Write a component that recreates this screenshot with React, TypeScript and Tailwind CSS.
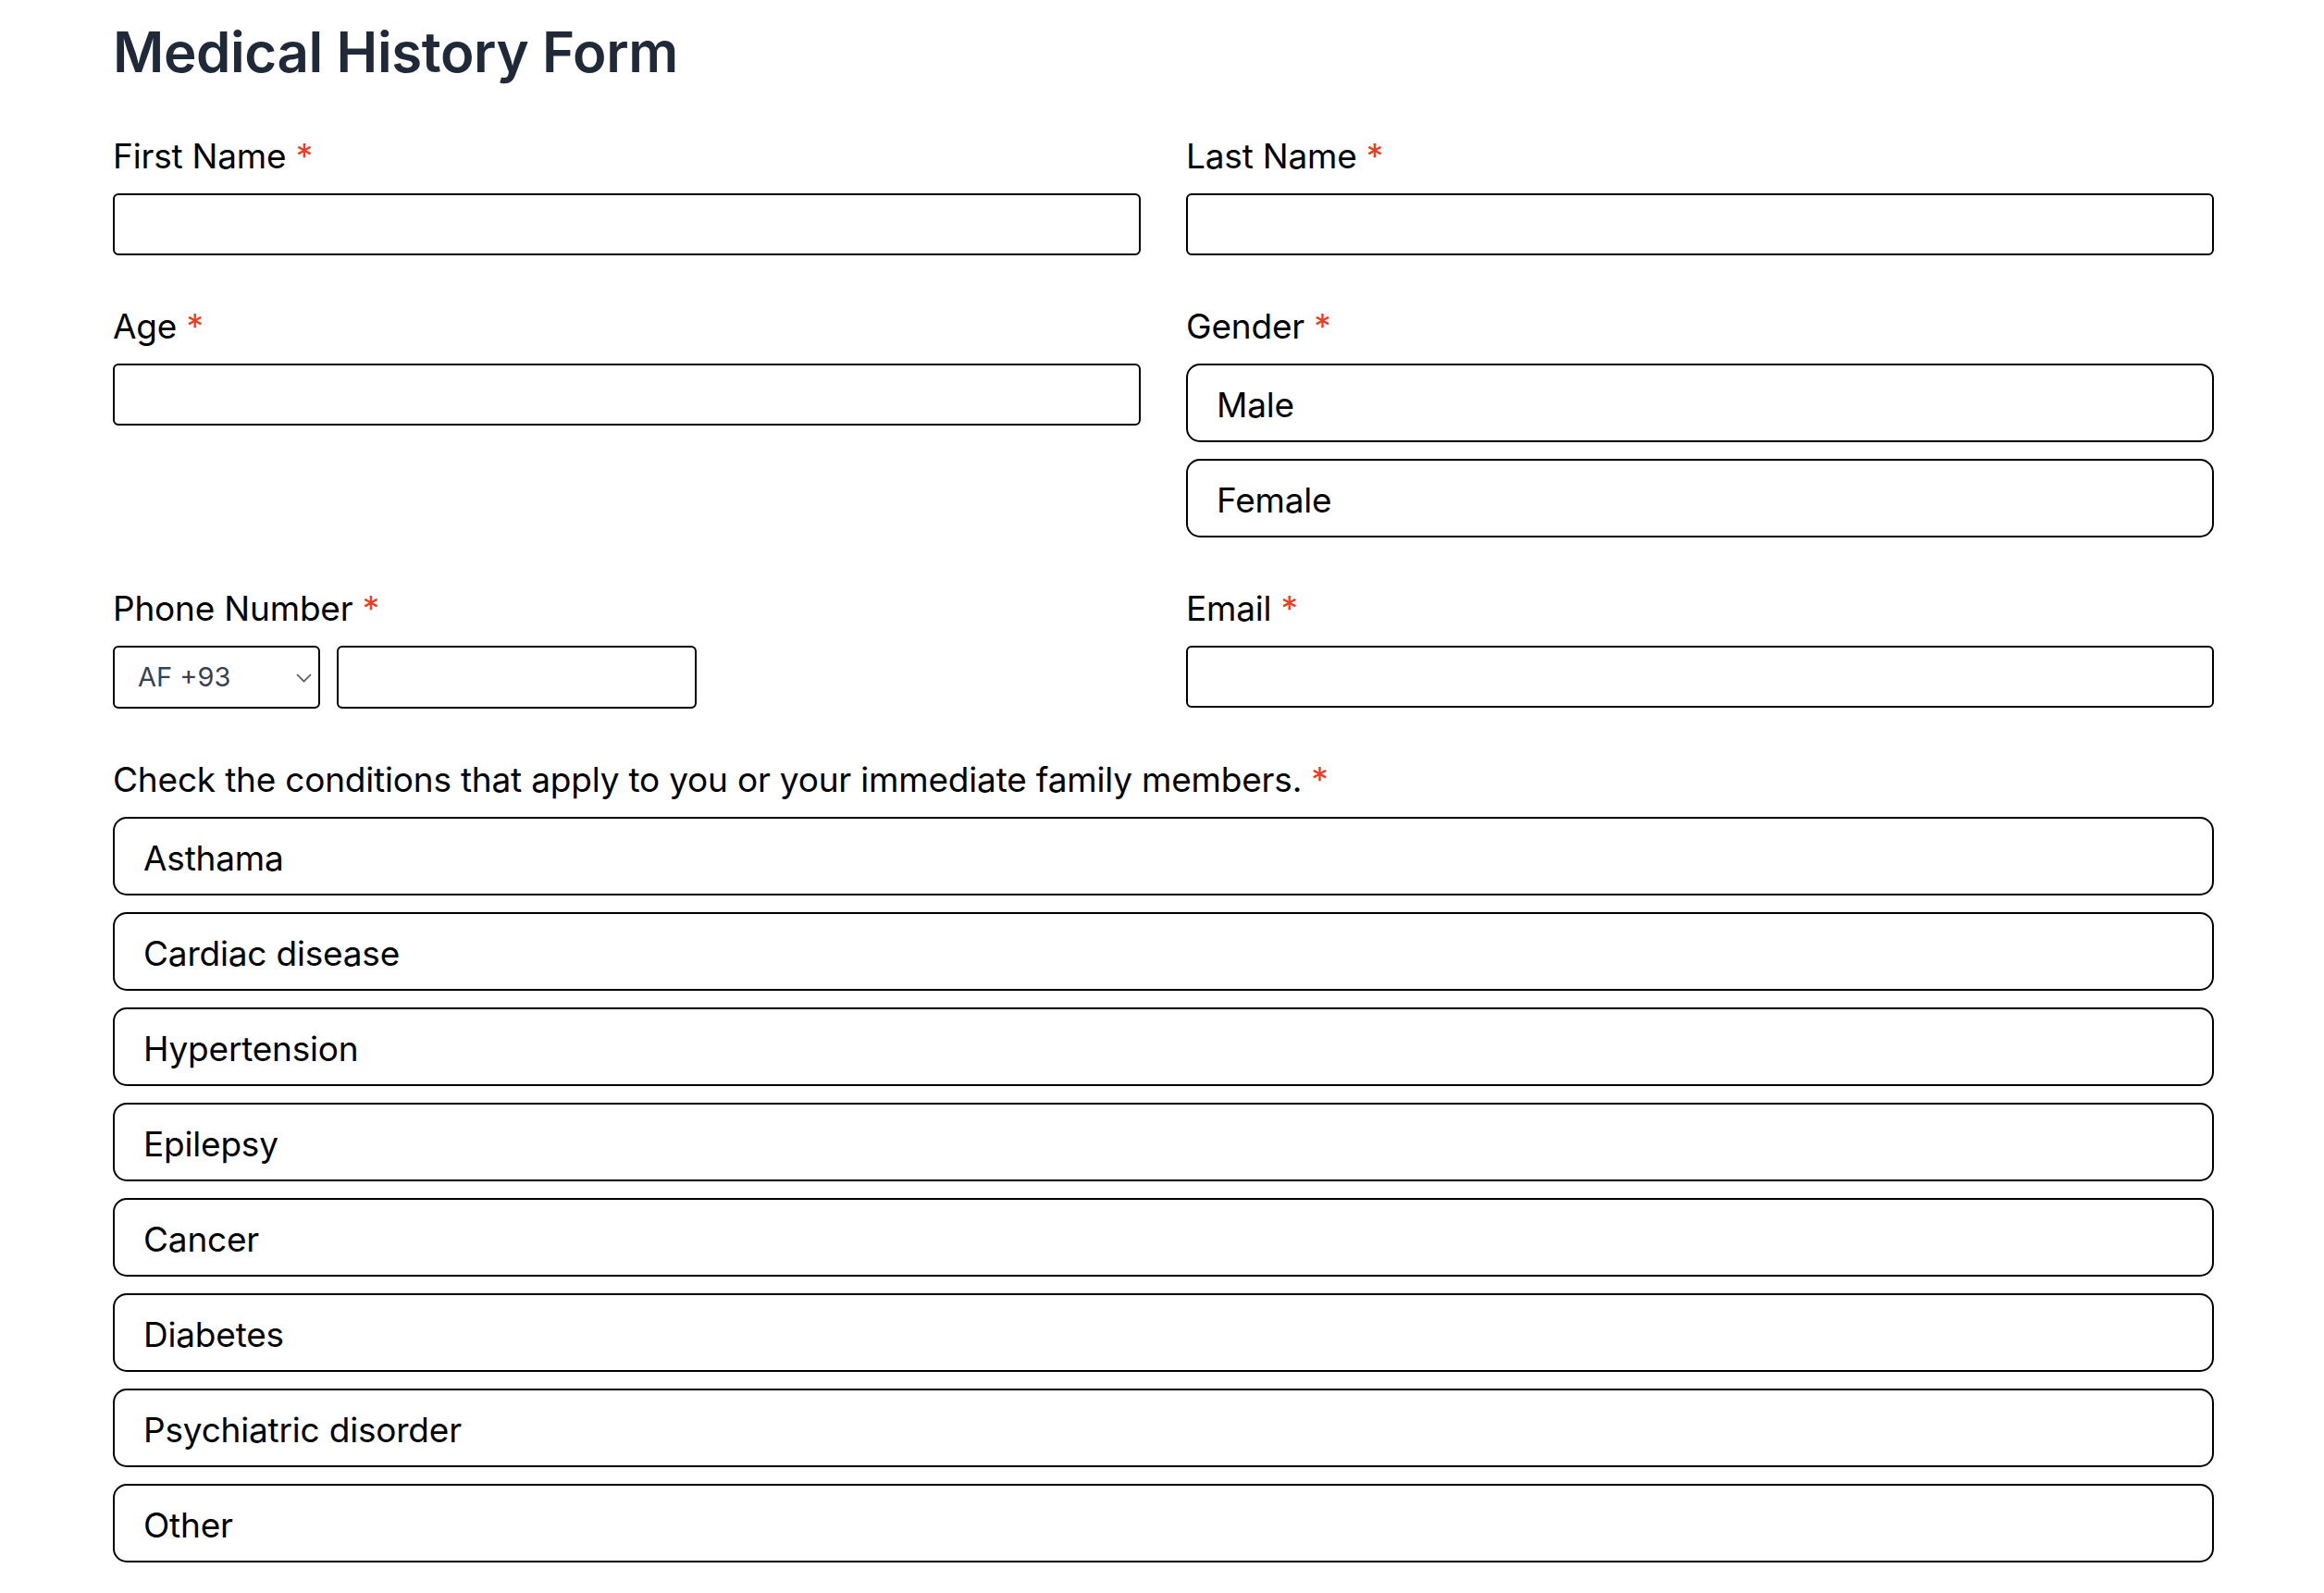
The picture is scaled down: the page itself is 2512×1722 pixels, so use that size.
import React from 'react'

const conditions = [
  'Asthama',
  'Cardiac disease',
  'Hypertension',
  'Epilepsy',
  'Cancer',
  'Diabetes',
  'Psychiatric disorder',
  'Other',
]

function Label({ text }: { text: string }) {
  return (
    <label className="block h-[57px] text-[37px] leading-[57px] tracking-[-0.2px] text-black">
      {text} <span className="text-[#ef3b1f]">*</span>
    </label>
  )
}

function TextInput({ className = '' }: { className?: string }) {
  return (
    <input
      type="text"
      className={`mt-[12px] block h-[67px] rounded-[6px] border-2 border-black bg-white outline-none ${className}`}
    />
  )
}

function OptionBox({ text }: { text: string }) {
  return (
    <div className="flex h-[85px] items-center rounded-[15px] border-2 border-black px-[31px] pt-[4px] text-[37px] tracking-[-0.2px] text-black">
      {text}
    </div>
  )
}

export default function App() {
  return (
    <div
      className="min-h-screen bg-white"
      style={{ fontFamily: 'Inter, "Noto Sans", sans-serif' }}
    >
      <div className="ml-[122px] w-[2271px] pt-[20px]">
        <h1 className="h-[72px] text-[60px] font-semibold leading-[72px] tracking-[-0.4px] text-[#1f2937]">
          Medical History Form
        </h1>

        <div className="mt-[48px] grid grid-cols-2 gap-x-[49px] gap-y-[48px]">
          <div>
            <Label text="First Name" />
            <TextInput className="w-full" />
          </div>
          <div>
            <Label text="Last Name" />
            <TextInput className="w-full" />
          </div>

          <div>
            <Label text="Age" />
            <TextInput className="w-full" />
          </div>
          <div>
            <Label text="Gender" />
            <div className="mt-[12px] flex flex-col gap-[18px]">
              <OptionBox text="Male" />
              <OptionBox text="Female" />
            </div>
          </div>

          <div>
            <Label text="Phone Number" />
            <div className="mt-[12px] flex gap-[18px]">
              <div className="relative h-[68px] w-[224px] rounded-[6px] border-2 border-black">
                <div className="flex h-full items-center pl-[25px] text-[29px] text-[#374151]">
                  AF +93
                </div>
                <svg
                  className="absolute right-[7px] top-[28px]"
                  width="17"
                  height="10"
                  viewBox="0 0 17 10"
                  fill="none"
                >
                  <path d="M1 1l7.5 7.5L16 1" stroke="#4b5563" strokeWidth="1.6" />
                </svg>
              </div>
              <input
                type="text"
                className="block h-[68px] w-[389px] rounded-[6px] border-2 border-black outline-none"
              />
            </div>
          </div>
          <div>
            <Label text="Email" />
            <TextInput className="w-full" />
          </div>
        </div>

        <div className="mt-[48px]">
          <Label text="Check the conditions that apply to you or your immediate family members." />
          <div className="mt-[12px] flex flex-col gap-[18px]">
            {conditions.map((c) => (
              <OptionBox key={c} text={c} />
            ))}
          </div>
        </div>
      </div>
    </div>
  )
}
